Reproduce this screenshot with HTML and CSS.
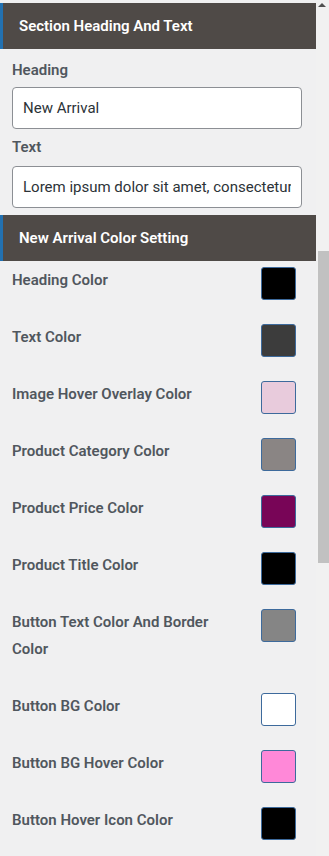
FILE: index.html
```html
<!DOCTYPE html>
<html lang="en">
<head>
    <meta charset="UTF-8">
    <meta name="viewport" content="width=device-width, initial-scale=1.0">
    <title>New Arrival Settings</title>
    <link rel="stylesheet" href="styles.css">
</head>
<body>
    <div class="frame">
        <div class="panel">
            <div class="section-title">Section Heading And Text</div>

            <div class="field">
                <label for="heading">Heading</label>
                <input type="text" id="heading" value="New Arrival">

                <label for="text">Text</label>
                <input type="text" id="text" value="Lorem ipsum dolor sit amet, consectetur adipiscing elit">
            </div>

            <div class="section-title">New Arrival Color Setting</div>

            <div class="colors">
                <div class="color-row">
                    <span class="color-label">Heading Color</span>
                    <span class="swatch" style="background-color: #000000;"></span>
                </div>
                <div class="color-row">
                    <span class="color-label">Text Color</span>
                    <span class="swatch" style="background-color: #3c3c3c;"></span>
                </div>
                <div class="color-row">
                    <span class="color-label">Image Hover Overlay Color</span>
                    <span class="swatch" style="background-color: #e8cbdc;"></span>
                </div>
                <div class="color-row">
                    <span class="color-label">Product Category Color</span>
                    <span class="swatch" style="background-color: #8a8584;"></span>
                </div>
                <div class="color-row">
                    <span class="color-label">Product Price Color</span>
                    <span class="swatch" style="background-color: #780557;"></span>
                </div>
                <div class="color-row">
                    <span class="color-label">Product Title Color</span>
                    <span class="swatch" style="background-color: #000000;"></span>
                </div>
                <div class="color-row">
                    <span class="color-label">Button Text Color And Border Color</span>
                    <span class="swatch" style="background-color: #858585;"></span>
                </div>
                <div class="color-row">
                    <span class="color-label">Button BG Color</span>
                    <span class="swatch" style="background-color: #ffffff;"></span>
                </div>
                <div class="color-row">
                    <span class="color-label">Button BG Hover Color</span>
                    <span class="swatch" style="background-color: #ff88d8;"></span>
                </div>
                <div class="color-row">
                    <span class="color-label">Button Hover Icon Color</span>
                    <span class="swatch" style="background-color: #000000;"></span>
                </div>
            </div>
        </div>

        <div class="scrollbar">
            <span class="scroll-arrow"></span>
            <span class="scroll-thumb"></span>
        </div>
    </div>
</body>
</html>
```

FILE: styles.css
```css
body {
    font-family: Roboto, "Liberation Sans", Arial, sans-serif;
    background-color: #f0f0f1;
    margin: 0;
    padding: 0;
}

.frame {
    display: flex;
    height: 856px;
    overflow: hidden;
}

.panel {
    width: 316px;
    flex-shrink: 0;
    padding-top: 3px;
}

.section-title {
    height: 46px;
    display: flex;
    align-items: center;
    padding-left: 16px;
    border-left: 3px solid #2271b1;
    background-color: #4f4a47;
    color: #ffffff;
    font-size: 15px;
    font-weight: 600;
}

.field {
    padding: 11px 14px 7px 12px;
}

.field label {
    display: block;
    font-size: 15px;
    font-weight: 600;
    line-height: 20px;
    color: #50575e;
    margin-bottom: 7px;
}

.field input {
    display: block;
    box-sizing: border-box;
    width: 290px;
    height: 42px;
    padding: 0 10px;
    border: 1px solid #8c8f94;
    border-radius: 4px;
    background-color: #ffffff;
    font-family: inherit;
    font-size: 15px;
    color: #2c3338;
}

.field input + label {
    margin-top: 8px;
    margin-bottom: 9px;
}

.colors {
    padding: 6px 0 0 12px;
}

.color-row {
    display: flex;
    align-items: flex-start;
    margin-bottom: 24px;
}

.color-label {
    width: 230px;
    font-size: 15px;
    font-weight: 600;
    line-height: 27px;
    color: #50575e;
    padding-bottom: 6px;
}

.swatch {
    box-sizing: border-box;
    width: 35px;
    height: 33px;
    margin-left: 19px;
    border: 1px solid #3d6a9c;
    border-radius: 3px;
}

.scrollbar {
    width: 13px;
    display: flex;
    flex-direction: column;
    align-items: flex-end;
    background-color: #f1f1f1;
}

.scroll-arrow {
    width: 0;
    height: 0;
    margin: 3px 3px 0 0;
    border-left: 4px solid transparent;
    border-right: 4px solid transparent;
    border-bottom: 4px solid #505050;
}

.scroll-thumb {
    width: 11px;
    height: 312px;
    margin-top: 244px;
    background-color: #c1c1c1;
}
```
